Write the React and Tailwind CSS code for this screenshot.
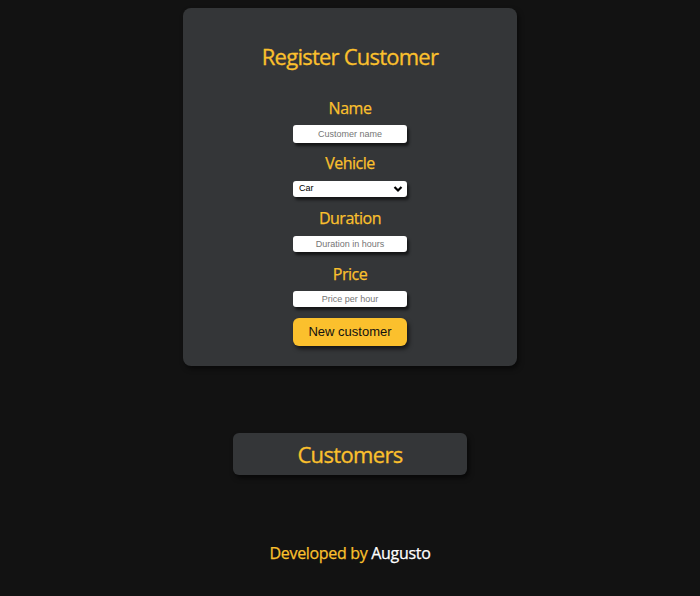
export default function App() {
  const label = "text-[16px] leading-[22px] tracking-[-0.03em] [-webkit-text-stroke:0.25px_#fbc02d] text-[#fbc02d]"
  const field =
    "block w-[114px] rounded-[3px] bg-white text-center text-[9px] text-[#555] placeholder:text-[#757575] outline-none shadow-[2px_3px_3px_rgba(0,0,0,0.6)] [font-family:'Liberation_Sans',Arial,sans-serif]"

  return (
    <div className="min-h-[596px] bg-[#121212] flex flex-col items-center pt-2 [font-family:'Open_Sans',sans-serif]">
      {/* Register card */}
      <div className="w-[334px] rounded-lg bg-[#343638] flex flex-col items-center pt-[33px] pb-[20px] shadow-[2px_3px_5px_rgba(0,0,0,0.5)]">
        <h1 className="text-[22px] leading-[30px] tracking-[-0.035em] [-webkit-text-stroke:0.3px_#fbc02d] text-[#fbc02d]">
          Register Customer
        </h1>

        <p className={`${label} mt-[26px]`}>Name</p>
        <input className={`${field} h-[18px] mt-[6px]`} placeholder="Customer name" />

        <p className={`${label} mt-[9px]`}>Vehicle</p>
        <div className="relative mt-[7px] w-[114px] h-[16px] rounded-[3px] bg-white shadow-[2px_3px_3px_rgba(0,0,0,0.6)] flex items-center pl-[6px] text-[9px] text-black [font-family:'Liberation_Sans',Arial,sans-serif]">
          Car
          <svg className="absolute right-[4px] top-[4px] w-[10px] h-[8px]" viewBox="0 0 10 8">
            <path d="M1.5 2 L5 5.5 L8.5 2" fill="none" stroke="#000" strokeWidth="2.2" />
          </svg>
        </div>

        <p className={`${label} mt-[10px]`}>Duration</p>
        <input className={`${field} h-[16px] mt-[7px]`} placeholder="Duration in hours" />

        <p className={`${label} mt-[11px]`}>Price</p>
        <input className={`${field} h-[16px] mt-[6px]`} placeholder="Price per hour" />

        <button className="mt-[11px] w-[114px] h-[28px] rounded-[6px] bg-[#fbc02d] text-[13px] text-[#111] shadow-[2px_3px_4px_rgba(0,0,0,0.6)] [font-family:'Liberation_Sans',Arial,sans-serif]">
          New customer
        </button>
      </div>

      {/* Customers button */}
      <div className="mt-[67px] w-[234px] h-[42px] rounded-md bg-[#343638] flex items-center justify-center text-[22px] tracking-[-0.03em] [-webkit-text-stroke:0.3px_#fbc02d] text-[#fbc02d] shadow-[2px_3px_5px_rgba(0,0,0,0.6)]">
        Customers
      </div>

      <p className="mt-[67px] text-[16px] leading-[22px] tracking-[-0.02em] [-webkit-text-stroke:0.25px_#fbc02d] text-[#fbc02d]">
        Developed by <span className="text-white [-webkit-text-stroke:0.25px_#fff]">Augusto</span>
      </p>
    </div>
  )
}
